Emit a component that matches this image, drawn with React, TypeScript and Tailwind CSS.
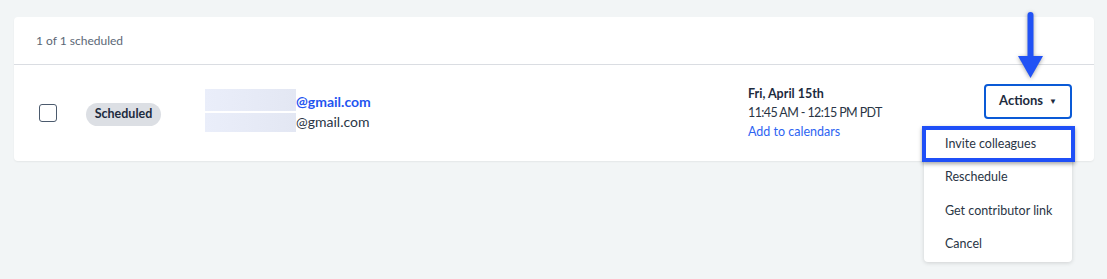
const font = { fontFamily: '"Lato", "Open Sans", sans-serif' }

function Checkbox() {
  return <div className="h-[18px] w-[18px] shrink-0 rounded-[3px] border-[1.5px] border-[#4b5a6d] bg-white" />
}

function Blur({ h }: { h: string }) {
  return <div className={`w-[91px] ${h} bg-gradient-to-r from-[#eaeefa] to-[#e3e7f3]`} />
}

export default function App() {
  const menuItems = ['Reschedule', 'Get contributor link', 'Cancel']

  return (
    <div className="relative min-h-screen w-full bg-[#f2f5f6] pt-[17px] pl-[14px] pr-[13px] text-[#1d2b3e]" style={font}>
      {/* card */}
      <div className="rounded-[4px] bg-white shadow-[0_1px_2px_rgba(0,0,0,0.06)]">
        <div className="flex h-[48px] items-center border-b border-[#dadde2] pl-[22px] text-[12px] text-[#5b6776]">
          1 of 1 scheduled
        </div>
        <div className="flex h-[96px] items-center pl-[25px] pr-[22px]">
          <Checkbox />
          <div className="ml-[29px] mt-[2px] flex h-[23px] w-[75px] items-center justify-center rounded-full bg-[#dcdfe4] text-[12.5px] font-bold text-[#1d2b3e]">
            Scheduled
          </div>
          <div className="mb-[6px] ml-[44px] flex flex-1 flex-col">
            <div className="flex items-end">
              <Blur h="h-[22px]" />
              <span className="mb-[1px] text-[14px] font-bold leading-[16px] text-[#1f55f0]">@gmail.com</span>
            </div>
            <div className="mt-[2px] flex items-center">
              <Blur h="h-[19px]" />
              <span className="text-[14px] leading-[16px] text-[#2a3545]">@gmail.com</span>
            </div>
          </div>
          <div className="flex w-[236px] flex-col gap-[3px] text-[12.5px] leading-[16px]">
            <span className="font-bold">Fri, April 15th</span>
            <span className="tracking-[-0.6px] text-[#2a3545]">11:45 AM - 12:15 PM PDT</span>
            <span className="text-[#2d64f2]">Add to calendars</span>
          </div>
          <button className="mb-[24px] flex h-[35px] w-[88px] items-center justify-center gap-[6px] rounded-[4px] border-2 border-[#0a5ad6] bg-white text-[13px] font-bold text-[#1d2b3e]">
            Actions
            <span className="text-[8px] leading-none">▼</span>
          </button>
        </div>
      </div>

      {/* dropdown menu */}
      <div className="absolute left-[924px] top-[128px] w-[148px] rounded-[4px] bg-white text-[12.5px] text-[#2a3545] shadow-[0_1px_4px_rgba(0,0,0,0.15)]">
        <div className="flex h-[33px] items-center pl-[21px]">Invite colleagues</div>
        {menuItems.map((item) => (
          <div key={item} className="flex h-[33.5px] items-center pl-[21px]">
            {item}
          </div>
        ))}
      </div>

      {/* highlight box */}
      <div className="absolute left-[922px] top-[126px] h-[36px] w-[153px] border-[4px] border-[#1f4ff7] shadow-[0_2px_4px_rgba(0,0,0,0.35)]" />

      {/* annotation arrow */}
      <svg className="absolute left-[1017px] top-[10px] drop-shadow-[0_1px_2px_rgba(0,0,0,0.35)]" width="28" height="72" viewBox="0 0 28 72">
        <line x1="13.5" y1="5" x2="13.5" y2="52" stroke="#2152f5" strokeWidth="6" strokeLinecap="round" />
        <polygon points="1,46 26,46 13.5,68" fill="#2152f5" />
      </svg>
    </div>
  )
}
